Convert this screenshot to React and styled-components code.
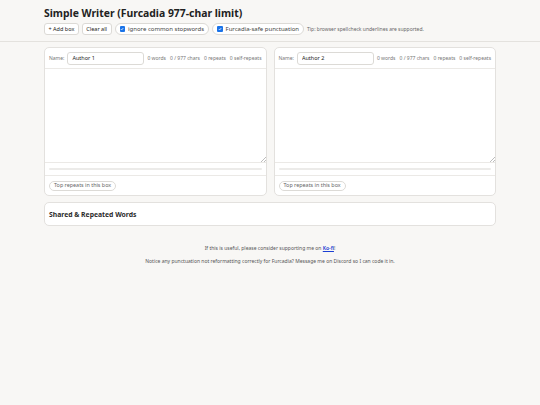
import React from "react";
import styled, { createGlobalStyle } from "styled-components";

const Global = createGlobalStyle`
  html, body { margin: 0; padding: 0; }
  body {
    background: #f8f7f5;
    font-family: "Noto Sans", "DejaVu Sans", sans-serif;
    color: #222;
  }
  * { box-sizing: border-box; }
`;

const Header = styled.header`
  padding: 6px 44px 6px;
  border-bottom: 1px solid #e4e2de;
`;

const Title = styled.h1`
  margin: 0;
  font-size: 10.4px;
  font-weight: 700;
  line-height: 14px;
  color: #222;
`;

const Toolbar = styled.div`
  display: flex;
  align-items: center;
  gap: 3px;
  margin-top: 3px;
`;

const Button = styled.button`
  height: 12px;
  padding: 0 3.5px;
  font-family: inherit;
  font-size: 5.5px;
  color: #222;
  background: #fff;
  border: 1px solid #dcdad6;
  border-radius: 3px;
  display: inline-flex;
  align-items: center;
`;

const Pill = styled.label`
  height: 12px;
  padding: 0 4px;
  display: inline-flex;
  align-items: center;
  gap: 3px;
  font-size: 6px;
  color: #444;
  background: #fff;
  border: 1px solid #dcdad6;
  border-radius: 999px;
`;

const Check = styled.span`
  width: 5.5px;
  height: 5.5px;
  border-radius: 1px;
  background: #1a73e8;
  display: inline-flex;
  align-items: center;
  justify-content: center;
`;

const Tip = styled.span`
  font-size: 5px;
  color: #666;
`;

const Main = styled.main`
  width: 452px;
  margin: 5px auto 0;
`;

const Grid = styled.div`
  display: grid;
  grid-template-columns: 1fr 1fr;
  gap: 7px;
`;

const Card = styled.section`
  background: #fff;
  border: 1px solid #e3e1de;
  border-radius: 5px;
  overflow: hidden;
`;

const CardHead = styled.div`
  height: 21px;
  padding: 0 4px;
  display: flex;
  align-items: center;
  gap: 3px;
  border-bottom: 1px solid #ebe9e6;
`;

const Label = styled.span`
  font-size: 5px;
  color: #777;
`;

const NameInput = styled.input`
  width: 77px;
  height: 13px;
  padding: 0 4px;
  font-family: inherit;
  font-size: 5.5px;
  color: #222;
  border: 1px solid #dcdad6;
  border-radius: 3px;
  outline: none;
`;

const Stats = styled.div`
  display: flex;
  gap: 4px;
  font-size: 5px;
  color: #777;
  white-space: nowrap;
`;

const TextArea = styled.textarea`
  display: block;
  width: 100%;
  height: 94px;
  border: none;
  border-bottom: 1px solid #ebe9e6;
  resize: vertical;
  outline: none;
  padding: 4px;
  font-family: inherit;
  font-size: 6px;
  &::-webkit-resizer {
    background: linear-gradient(
      135deg,
      transparent 0 82%,
      #bdbdbd 82% 86%,
      transparent 86% 91%,
      #bdbdbd 91% 95%,
      transparent 95%
    );
  }
`;

const BarWrap = styled.div`
  padding: 5px 4px;
  border-bottom: 1px solid #ebe9e6;
`;

const Bar = styled.div`
  height: 2px;
  background: #ecebe9;
  border-radius: 2px;
`;

const CardFoot = styled.div`
  display: flex;
  align-items: center;
  padding: 5px 4px 4px;
`;

const Chip = styled.span`
  display: inline-flex;
  align-items: center;
  height: 10px;
  padding: 0 4px;
  font-size: 5.4px;
  line-height: 1;
  color: #666;
  border: 1px solid #dcdad6;
  border-radius: 999px;
`;

const Shared = styled.section`
  margin-top: 6px;
  height: 24px;
  padding: 0 4px;
  display: flex;
  align-items: center;
  background: #fff;
  border: 1px solid #e3e1de;
  border-radius: 5px;
`;

const SharedTitle = styled.h2`
  margin: 0;
  font-size: 6.8px;
  font-weight: 700;
  color: #2a2a2a;
`;

const Footer = styled.footer`
  margin-top: 19px;
  text-align: center;
  font-size: 5px;
  color: #555;
`;

const FootLine = styled.p`
  margin: 0 0 6px;
  line-height: 7px;
`;

const Link = styled.a`
  color: #1a3fd4;
  font-weight: 600;
`;

function CheckIcon() {
  return (
    <Check>
      <svg width="4" height="4" viewBox="0 0 10 10">
        <path d="M2 5.2 L4.2 7.4 L8.2 2.6" fill="none" stroke="#fff" strokeWidth="1.8" />
      </svg>
    </Check>
  );
}

function Box({ name }) {
  return (
    <Card>
      <CardHead>
        <Label>Name:</Label>
        <NameInput defaultValue={name} />
        <Stats>
          <span>0 words</span>
          <span>0 / 977 chars</span>
          <span>0 repeats</span>
          <span>0 self-repeats</span>
        </Stats>
      </CardHead>
      <TextArea spellCheck />
      <BarWrap>
        <Bar />
      </BarWrap>
      <CardFoot>
        <Chip>Top repeats in this box</Chip>
      </CardFoot>
    </Card>
  );
}

export default function App() {
  return (
    <>
      <Global />
      <Header>
        <Title>Simple Writer (Furcadia 977-char limit)</Title>
        <Toolbar>
          <Button>+ Add box</Button>
          <Button>Clear all</Button>
          <Pill>
            <CheckIcon />
            ignore common stopwords
          </Pill>
          <Pill>
            <CheckIcon />
            Furcadia-safe punctuation
          </Pill>
          <Tip>Tip: browser spellcheck underlines are supported.</Tip>
        </Toolbar>
      </Header>
      <Main>
        <Grid>
          <Box name="Author 1" />
          <Box name="Author 2" />
        </Grid>
        <Shared>
          <SharedTitle>Shared &amp; Repeated Words</SharedTitle>
        </Shared>
        <Footer>
          <FootLine>
            If this is useful, please consider supporting me on <Link href="#">Ko-fi</Link>!
          </FootLine>
          <FootLine>
            Notice any punctuation not reformatting correctly for Furcadia? Message me on Discord so I can code it in.
          </FootLine>
        </Footer>
      </Main>
    </>
  );
}
